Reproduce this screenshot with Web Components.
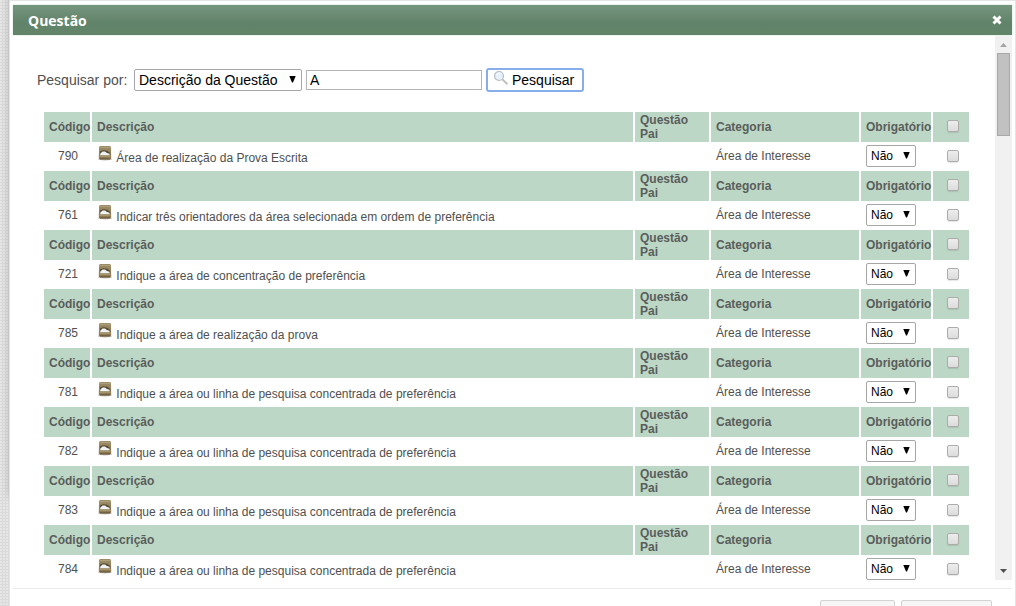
<!DOCTYPE html>
<html lang="pt-BR">
<head>
<meta charset="utf-8">
<title>Questão</title>
<style>
html,body{height:100%}
body{margin:0;overflow:hidden;font-family:"Liberation Sans",Arial,sans-serif;font-size:12px;color:#505050;background:#dadada radial-gradient(circle at 1px 1px,#e6e6e6 1px,transparent 1px) 0 0/3px 3px}
</style>
</head>
<body>
<question-dialog heading="Questão">
  <search-form></search-form>
  <question-table></question-table>
</question-dialog>
<script>
function define(name, html, setup) {
  const template = document.createElement('template');
  template.innerHTML = html;
  customElements.define(name, class extends HTMLElement {
    constructor() {
      super();
      this.attachShadow({mode: 'open'}).append(template.content.cloneNode(true));
    }
    connectedCallback() {
      if (setup && !this.ready) { this.ready = true; setup(this, this.shadowRoot); }
    }
  });
}

define('drop-down', `
<style>
:host{display:inline-block;position:relative;vertical-align:middle;height:22px}
select{appearance:none;box-sizing:border-box;display:block;width:100%;height:100%;margin:0;padding:0 18px 0 4px;border:1px solid #a6a6a6;border-radius:2px;background:#fff;color:#000;font:inherit}
svg{position:absolute;right:6px;top:7px;width:7px;height:7px;pointer-events:none}
</style>
<select></select><svg viewBox="0 0 7 7"><path d="M.3 0h6.400L4 6.500H3z" fill="#000"/></svg>`,
(host, root) => {
  const select = root.querySelector('select');
  select.setAttribute('aria-label', host.getAttribute('label'));
  host.getAttribute('options').split('|').forEach(o => select.add(new Option(o)));
});

define('check-box', `
<style>
:host{display:block;width:12px;height:12px}
input{appearance:none;box-sizing:border-box;display:block;width:12px;height:12px;margin:0;border:1px solid #acacac;border-radius:2px;background:linear-gradient(#ededed,#dcdcdc);box-shadow:0 1px 1px #0000001a}
input:checked{background:#777}
</style>
<input type="checkbox">`,
(host, root) => root.querySelector('input').setAttribute('aria-label', host.getAttribute('label')));

define('question-icon', `
<style>:host{display:inline-block;width:16px;height:16px}svg{display:block}</style>
<svg width="16" height="16" viewBox="0 0 16 16" aria-hidden="true">
<defs><linearGradient id="g" x2="0" y2="1"><stop stop-color="#9c8c68"/><stop offset="1" stop-color="#8b7850"/></linearGradient></defs>
<ellipse cx="8" cy="13.200" rx="7" ry="1.300" fill="#aaa294" opacity=".7"/>
<path d="M3.500 0h9q1.300 0 1.400 1.300l.3 10.700q0 1.300-1.300 1.300H3.100Q1.800 13.300 1.800 12L2.100 1.300Q2.200 0 3.500 0z" fill="url(#g)"/>
<path d="M2.500 1.500h11" stroke="#ae9f7b"/>
<path d="M3 5.500l3-1.200 4 .5 3.200 2.200v2H3z" fill="#54482f"/>
<path d="M3.200 9.200V7.700L5.500 5.500l2.500 0 2 1.500 2.600.8v1.400z" fill="#f0f3f6"/>
<path d="M2.400 10.300h11.200" stroke="#ab9b70"/><path d="M3 13h10" stroke="#4b3f29" stroke-width=".8"/>
</svg>`);

define('search-form', `
<style>
:host{display:block;margin-left:24px;font-size:14px}
form{display:flex;align-items:center;gap:4px;height:24px}
label{flex:none;width:93px;white-space:nowrap}
drop-down{width:168px;font-size:14px}
input{box-sizing:border-box;width:176px;height:20px;margin:0;padding:0 3px;border:1px solid #b4b4b4;background:#fff;color:#000;font:inherit}
button{box-sizing:border-box;display:flex;align-items:center;gap:3px;width:98px;height:24px;padding:0 5px;border:2px solid #87aeea;border-radius:3px;background:#fff;color:#000;font:inherit}
svg{flex:none;align-self:flex-start}
</style>
<form onsubmit="return false">
<label for="term">Pesquisar por:</label>
<drop-down label="Campo" options="Descrição da Questão|Código"></drop-down>
<input id="term" type="text" value="A">
<button type="submit"><svg width="16" height="16" viewBox="0 0 16 16"><circle cx="6" cy="6" r="4.5" fill="#e6f1fc" stroke="#b5bbc4" stroke-width="1.2"/><path d="M3.5 5Q4.5 3 6.5 3.2" fill="none" stroke="#fff"/><path d="M9.4 9.4l5 4.8" stroke="#aaa" stroke-width="1.7"/><path d="M9.4 9l5 4.8" stroke="#e5e0d8" stroke-width=".7"/></svg>Pesquisar</button>
</form>`);

define('question-table', `
<style>
:host{display:block;margin:20px 26px 0 31px}
table{width:100%;table-layout:fixed;border-collapse:separate;border-spacing:0}
th,td{box-sizing:border-box;padding:0 0 0 5px;text-align:left;vertical-align:middle;line-height:14px}
th{height:30px;background:#bcd7c6;border-right:2px solid #fff;color:#5a5d5b;white-space:nowrap}
th:last-child{border-right:0}
th.parent{white-space:normal;padding-right:16px}
td{height:29px;padding-bottom:2px}
td.code{padding-left:0;text-align:center}
th.check,td.check{padding-left:14px}
th.check{padding-bottom:2px}
.code-col{width:48px}.parent-col{width:76px}.category-col{width:150px}.required-col{width:72px}.check-col{width:36px}
drop-down{width:50px}
</style>
<table><colgroup><col class="code-col"><col><col class="parent-col"><col class="category-col"><col class="required-col"><col class="check-col"></colgroup></table>`,
(host, root) => {
  const line = 'Indique a área ou linha de pesquisa concentrada de preferência';
  const questions = [
    [790, 'Área de realização da Prova Escrita'],
    [761, 'Indicar três orientadores da área selecionada em ordem de preferência'],
    [721, 'Indique a área de concentração de preferência'],
    [785, 'Indique a área de realização da prova'],
    [781, line], [782, line], [783, line], [784, line]
  ];
  root.querySelector('table').insertAdjacentHTML('beforeend', questions.map(([code, text]) => `<tbody>
<tr><th>Código</th><th>Descrição</th><th class="parent">Questão Pai</th><th>Categoria</th><th>Obrigatório</th><th class="check"><check-box label="Selecionar todas"></check-box></th></tr>
<tr><td class="code">${code}</td><td><question-icon></question-icon> ${text}</td><td></td><td>Área de Interesse</td><td><drop-down label="Obrigatório ${code}" options="Não|Sim"></drop-down></td><td class="check"><check-box label="Selecionar ${code}"></check-box></td></tr></tbody>`).join(''));
});

define('scroll-rail', `
<style>
:host{display:flex;flex-direction:column;flex:none;width:17px;background:#f1f1f1}
svg{display:block;flex:none}
.track{flex:1;padding:0 2px}
.thumb{box-sizing:border-box;height:83px;border:1px solid #a8a8a8;background:#c1c1c1}
</style>
<svg width="17" height="17"><path d="M5 11l3.5-4 3.5 4z" fill="#a3a3a3"/></svg>
<div class="track"><div class="thumb"></div></div>
<svg width="17" height="17"><path d="M5 6h7l-3.500 4z" fill="#505050"/></svg>`);

define('question-dialog', `
<style>
:host{box-sizing:border-box;display:flex;flex-direction:column;height:100vh;margin-left:9px;padding:4px 3px 0;border:solid #e4e4e4;border-width:1px 1px 0;background:#fff;box-shadow:0 -110px 8px #00000033}
header{box-sizing:border-box;flex:none;display:flex;align-items:center;justify-content:space-between;height:30px;margin-bottom:1px;padding:0 10px 0 15px;background:linear-gradient(#76957f,#618369 60%,#628469);box-shadow:0 0 1px #86c5a0;color:#fff}
h1{margin:0;font:bold 14px "Open Sans",sans-serif}
header button{display:flex;padding:0;border:0;background:none;color:#fff}
.body{flex:1;min-height:0;display:flex}
.content{flex:1;min-width:0;overflow:hidden;padding-top:32px}
hr{flex:none;width:100%;margin:8px 0 0;border:0;border-top:1px solid #ebebeb}
footer{box-sizing:border-box;flex:none;display:flex;justify-content:flex-end;align-items:flex-start;gap:6px;height:17px;padding:11px 20px 0 0}
footer button{box-sizing:border-box;flex:none;height:28px;width:75px;padding:0;border:1px solid #d3d3d3;border-radius:2px;background:#f6f6f6}
footer button.wide{width:91px}
</style>
<header><h1></h1><button type="button" aria-label="Fechar"><svg width="10" height="10" viewBox="0 0 10 10"><path d="M1.500 1.500l7 7M8.500 1.500l-7 7" stroke="#fff" stroke-width="3"/></svg></button></header>
<div class="body"><div class="content"><slot></slot></div><scroll-rail></scroll-rail></div>
<hr>
<footer><button type="button" aria-label="Adicionar"></button><button type="button" class="wide" aria-label="Cancelar"></button></footer>`,
(host, root) => { root.querySelector('h1').textContent = host.getAttribute('heading'); });
</script>
</body>
</html>
